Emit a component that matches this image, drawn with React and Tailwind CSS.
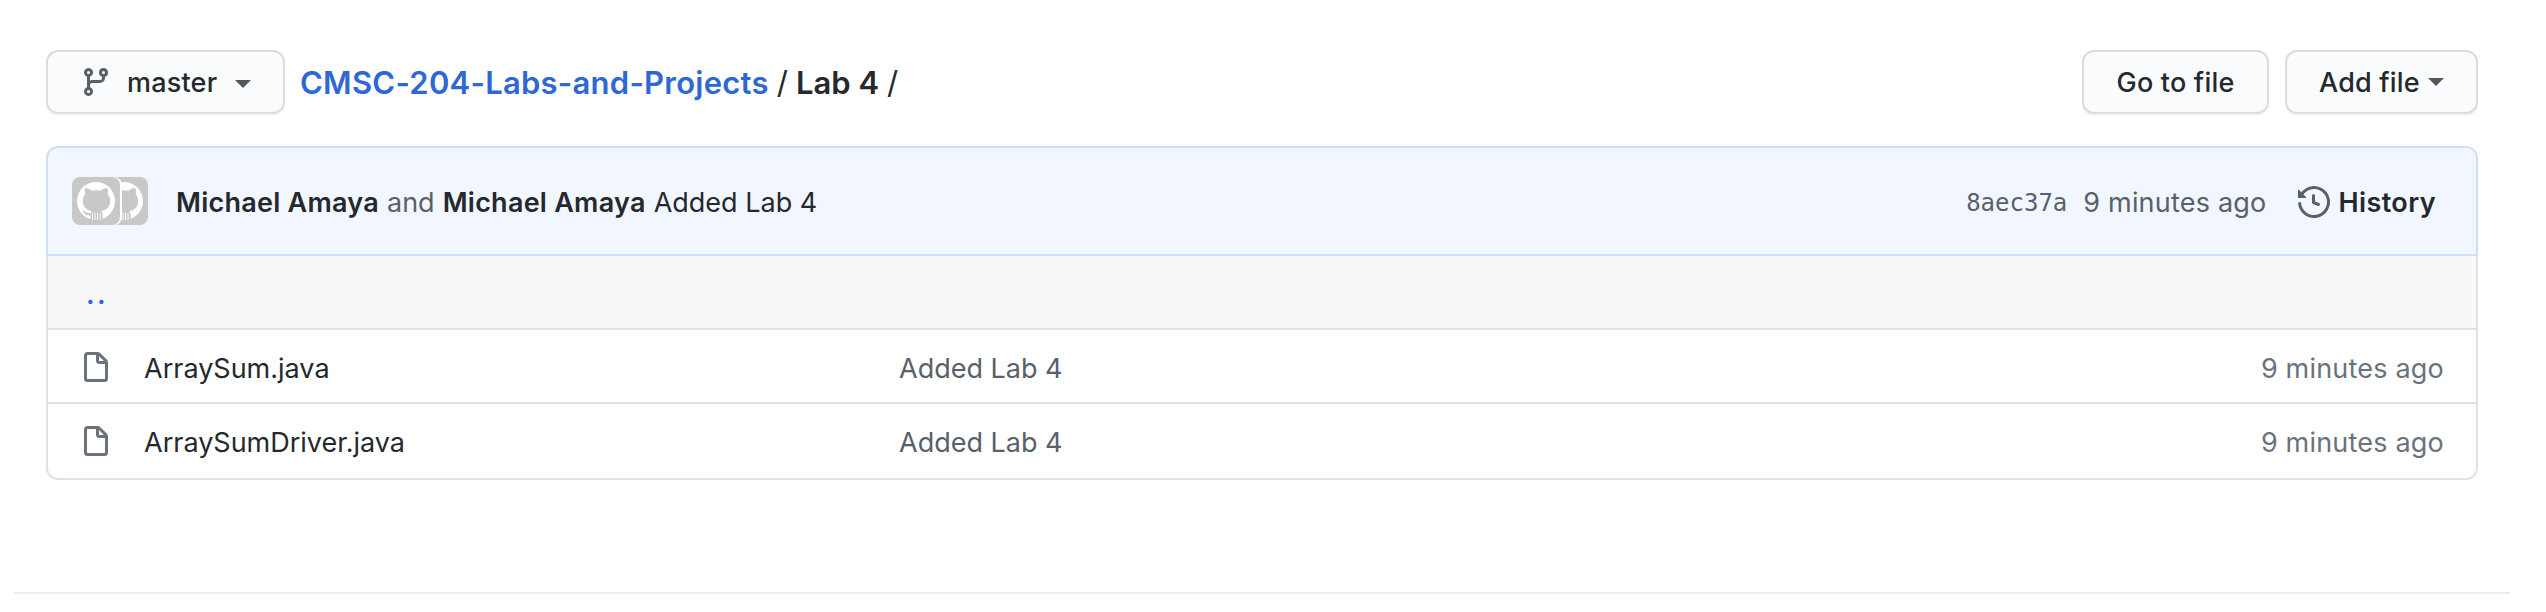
const BRANCH =
  "M11.75 2.5a.75.75 0 100 1.5.75.75 0 000-1.5zm-2.25.75a2.25 2.25 0 113 2.122V6A2.5 2.5 0 0110 8.5H6a1 1 0 00-1 1v1.128a2.251 2.251 0 11-1.5 0V5.372a2.25 2.25 0 111.5 0v1.836A2.492 2.492 0 016 7h4a1 1 0 001-1v-.628A2.25 2.25 0 019.5 3.25zM4.25 12a.75.75 0 100 1.5.75.75 0 000-1.5zM3.5 3.25a.75.75 0 111.5 0 .75.75 0 01-1.5 0z";
const FILE =
  "M3.75 1.5a.25.25 0 00-.25.25v11.5c0 .138.112.25.25.25h8.5a.25.25 0 00.25-.25V6H9.75A1.75 1.75 0 018 4.25V1.5H3.75zm5.75.56v2.19c0 .138.112.25.25.25h2.19L9.5 2.06zM2 1.75C2 .784 2.784 0 3.75 0h5.086c.464 0 .909.184 1.237.513l3.414 3.414c.329.328.513.773.513 1.237v8.086A1.75 1.75 0 0112.25 15h-8.5A1.75 1.75 0 012 13.25V1.75z";
const HISTORY =
  "M1.643 3.143L.427 1.927A.25.25 0 000 2.104V5.75c0 .138.112.25.25.25h3.646a.25.25 0 00.177-.427L2.715 4.215a6.5 6.5 0 11-1.18 4.458.75.75 0 10-1.493.154 8.001 8.001 0 101.6-5.684zM7.75 4a.75.75 0 01.75.75v2.992l2.028.812a.75.75 0 01-.557 1.392l-2.5-1A.75.75 0 017 8.25v-3.5A.75.75 0 017.75 4z";

function Octicon({ d, className }) {
  return (
    <svg viewBox="0 0 16 16" className={`size-8 shrink-0 fill-current ${className}`} aria-hidden="true">
      <path fillRule="evenodd" d={d} />
    </svg>
  );
}

function Caret({ className }) {
  return (
    <svg viewBox="0 0 16 8" className={`h-2 w-4 shrink-0 fill-[#54575b] ${className}`} aria-hidden="true">
      <path d="M0 0h16L8 8z" />
    </svg>
  );
}

function Button({ className, children }) {
  return (
    <button
      className={`flex h-16 items-center rounded-xl border-2 border-[#dadcde] bg-[#fafbfc] text-[27px] font-medium tracking-[0.2px] shadow-[0_2px_0_rgba(27,31,35,0.04)] ${className}`}
    >
      {children}
    </button>
  );
}

function Avatar({ className }) {
  return (
    <svg viewBox="0 0 48 48" className={`size-12 shrink-0 rounded-lg bg-[#c8c8c8] ${className}`} aria-hidden="true">
      <circle cx="24" cy="24" r="19" fill="#fff" />
      <path
        d="M13 11c2.500 0 4.800 1.200 6.800 2.700 2.800-.7 5.800-.7 8.600 0 2-1.500 4.300-2.700 6.800-2.700.9 2 1 4.200.4 6.200 1.700 2 2.500 4 2.500 6.600 0 6.300-3.400 9.400-9 10.300 1.100 1.200 1.500 2.300 1.500 4V43.500H18.500V38.500c-4 .4-5.600-1.300-6.800-3-.6-1-1.200-1.500-2-2 3.200-.6 4 2 6 2.600 1.300.4 2.400.2 3.300-.2.100-.7.400-1.300.8-1.800-5.600-.9-9-4-9-10.300 0-2.500.8-4.600 2.400-6.600-.6-2-.7-4.200-.2-6.200z"
        fill="#c8c8c8"
      />
      <path d="M20.500 36v7M23 35.500v7.500M25.500 35.500v7.500M28 36v7" stroke="#fff" strokeWidth=".9" />
    </svg>
  );
}

function FileRow({ name, className }) {
  return (
    <div className={`flex items-center border-t-2 border-[#e1e2e7] pr-8 pl-8 ${className}`}>
      <Octicon d={FILE} className="text-[#6a737d]" />
      <span className="mt-0.5 ml-8 w-[755px]">{name}</span>
      <span className="mt-0.5 flex-1 text-[#586069]">Added Lab 4</span>
      <span className="mt-0.5 tracking-[0.2px] text-[#6a737d]">9 minutes ago</span>
    </div>
  );
}

export default function App() {
  return (
    <div className="h-[612px] w-[2546px] overflow-hidden bg-white pt-[50px] font-['Inter',sans-serif] text-[27px] leading-10 text-[#24292e]">
      <div className="mr-[68px] ml-[46px] flex h-16 items-center">
        <Button className="w-[239px] pl-8">
          <Octicon d={BRANCH} className="text-[#586069]" />
          <span className="mt-0.5 ml-[15px]">master</span>
          <Caret className="mt-1 ml-[18px]" />
        </Button>
        <div className="mt-0.5 ml-[15px] flex items-center gap-2 text-[31px]">
          <a className="font-semibold tracking-[0.25px] text-[#2f68d5]">CMSC-204-Labs-and-Projects</a>
          <span>/</span>
          <span className="font-semibold">Lab 4</span>
          <span>/</span>
        </div>
        <div className="ml-auto flex gap-4">
          <Button className="w-[187px] justify-center pt-0.5">Go to file</Button>
          <Button className="w-[193px] pl-8">
            <span className="mt-0.5">Add file</span>
            <Caret className="ml-2" />
          </Button>
        </div>
      </div>

      <div className="mt-8 mr-[68px] ml-[46px]">
        <div className="flex h-[110px] items-center rounded-t-xl border-2 border-[#cfdffb] bg-[#f2f7ff] pr-10 pl-6">
          <div className="flex w-[76px]">
            <Avatar className="z-10 shadow-[2px_0_0_#fff]" />
            <Avatar className="-ml-5" />
          </div>
          <div className="mt-[3px] ml-7 flex gap-2">
            <span className="font-semibold tracking-[0.25px]">Michael Amaya</span>
            <span className="text-[#586069]">and</span>
            <span className="font-semibold tracking-[0.25px]">Michael Amaya</span>
            <span>Added Lab 4</span>
          </div>
          <span className="mt-[3px] ml-auto font-['DejaVu_Sans_Mono',monospace] text-2xl text-[#586069]">8aec37a</span>
          <span className="mt-[3px] ml-4 tracking-[0.2px] text-[#586069]">9 minutes ago</span>
          <Octicon d={HISTORY} className="mt-0.5 ml-8 text-[#586069]" />
          <span className="mt-[3px] ml-2 font-semibold tracking-[0.4px]">History</span>
        </div>
        <div className="rounded-b-xl border-2 border-t-0 border-[#e1e2e7]">
          <div className="h-[72px] bg-[#f6f8fa] pt-[19px] pl-[38px] font-semibold tracking-[2.5px] text-[#2f68d5]">..</div>
          <FileRow name="ArraySum.java" className="h-[74px] pt-1" />
          <FileRow name="ArraySumDriver.java" className="h-[76px] pt-0.5" />
        </div>
      </div>

      <div className="mt-28 mr-9 ml-3.5 h-0.5 bg-[#eaecef]" />
    </div>
  );
}
